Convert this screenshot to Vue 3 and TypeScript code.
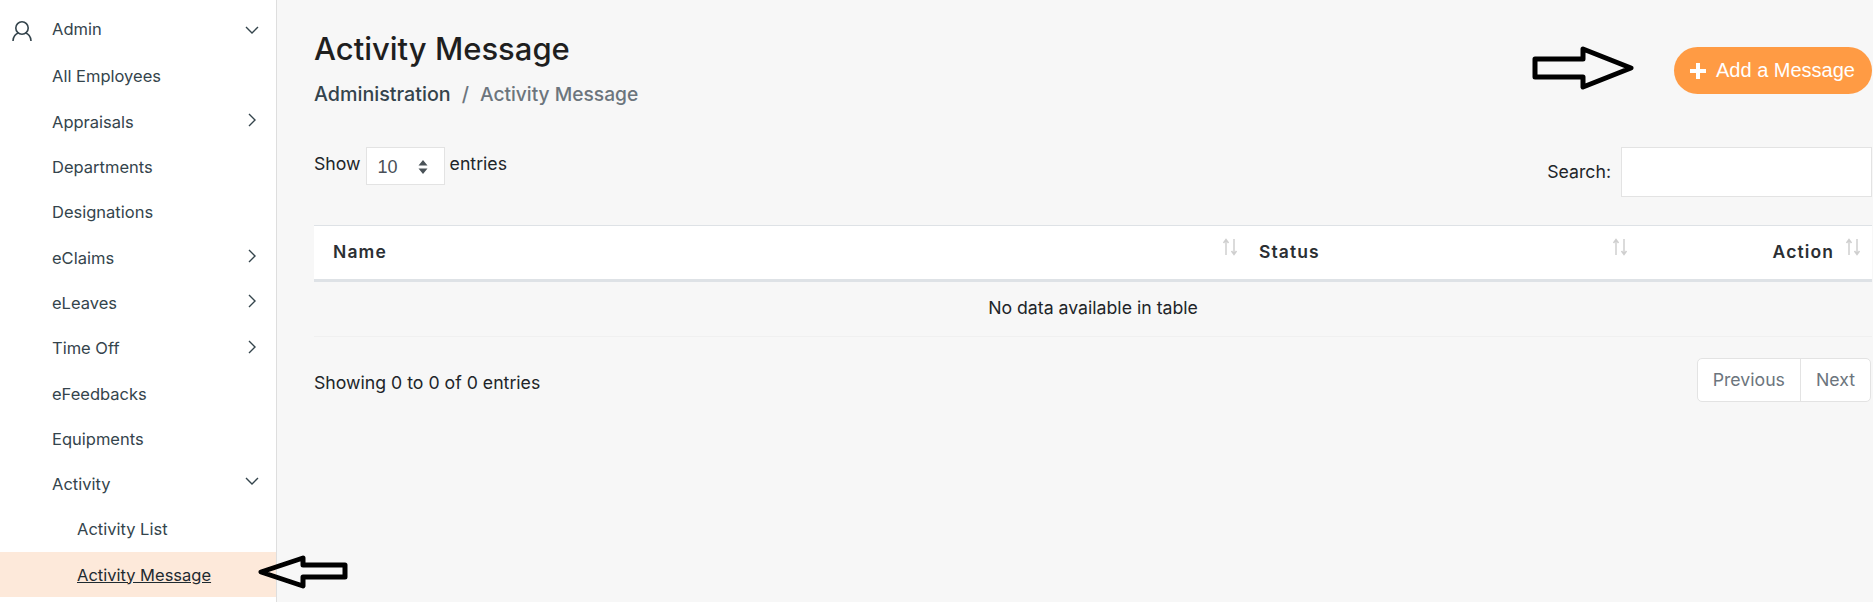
<script setup lang="ts">
interface NavItem {
  label: string
  arrow?: 'right' | 'down'
}

const navItems: NavItem[] = [
  { label: 'All Employees' },
  { label: 'Appraisals', arrow: 'right' },
  { label: 'Departments' },
  { label: 'Designations' },
  { label: 'eClaims', arrow: 'right' },
  { label: 'eLeaves', arrow: 'right' },
  { label: 'Time Off', arrow: 'right' },
  { label: 'eFeedbacks' },
  { label: 'Equipments' },
  { label: 'Activity', arrow: 'down' },
]

const columns = ['Name', 'Status', 'Action']
</script>

<template>
  <div class="page">
    <aside class="sidebar">
      <div class="nav-row nav-head">
        <svg class="user-icon" viewBox="0 0 20 20" width="20" height="20" fill="none" stroke="#34444c" stroke-width="1.6">
          <circle cx="10" cy="7" r="6.200" />
          <path d="M1 20c0-4.500 3-7.500 5.500-8M19 20c0-4.500-3-7.500-5.500-8" />
        </svg>
        <span>Admin</span>
        <svg class="chevron" viewBox="0 0 14 14" width="14" height="14" fill="none" stroke="#34444c" stroke-width="1.400">
          <path d="M1 4l6 6 6-6" />
        </svg>
      </div>
      <div v-for="item in navItems" :key="item.label" class="nav-row">
        <span>{{ item.label }}</span>
        <svg v-if="item.arrow === 'right'" class="chevron chevron-right" viewBox="0 0 14 14" width="14" height="14" fill="none" stroke="#34444c" stroke-width="1.400">
          <path d="M4 1l6 6-6 6" />
        </svg>
        <svg v-else-if="item.arrow === 'down'" class="chevron chevron-open" viewBox="0 0 14 14" width="14" height="14" fill="none" stroke="#34444c" stroke-width="1.400">
          <path d="M1 4l6 6 6-6" />
        </svg>
      </div>
      <div class="nav-row nav-sub">Activity List</div>
      <div class="nav-row nav-sub nav-active"><u>Activity Message</u></div>
    </aside>

    <main class="content">
      <div class="page-header">
        <div>
          <h1>Activity Message</h1>
          <div class="crumbs">
            <span class="crumb-root">Administration</span>
            <span class="crumb-sep">/</span>
            <span class="crumb-current">Activity Message</span>
          </div>
        </div>
        <button class="add-btn">
          <svg viewBox="0 0 16 16" width="16" height="16" fill="#fff"><path d="M6 0h4v6h6v4h-6v6H6v-6H0V6h6z" /></svg>
          Add a Message
        </button>
      </div>

      <div class="controls">
        <div class="length">
          <span>Show</span>
          <div class="select">
            <span>10</span>
            <svg viewBox="0 0 10 14" width="10" height="14" fill="#4a5258"><path d="M5 0l4.500 5.500h-9zM5 14L.5 8.500h9z" /></svg>
          </div>
          <span>entries</span>
        </div>
        <div class="search">
          <span class="search-label">Search:</span>
          <div class="search-box"></div>
        </div>
      </div>

      <div class="table">
        <div class="thead">
          <div v-for="col in columns" :key="col" class="th" :class="'th-' + col.toLowerCase()">
            <span>{{ col }}</span>
            <svg class="sort" viewBox="0 0 16 18" width="16" height="18" fill="none" stroke="#cfcfcf" stroke-width="1.500">
              <path d="M4 17V2M1.500 5L4 1.500 6.500 5" />
              <path d="M12 1v15M9.500 13l2.500 3.500 2.500-3.500" />
            </svg>
          </div>
        </div>
        <div class="empty">No data available in table</div>
      </div>

      <div class="table-foot">
        <span>Showing 0 to 0 of 0 entries</span>
        <div class="pager">
          <span class="page-btn">Previous</span>
          <span class="page-btn">Next</span>
        </div>
      </div>
    </main>

    <!-- hand drawn annotation arrows -->
    <svg class="note note-top" viewBox="0 0 102 44" width="102" height="44" fill="none" stroke="#000" stroke-width="5" stroke-linejoin="round">
      <path d="M3 13h48V3l48 19-48 19V31H3z" />
    </svg>
    <svg class="note note-side" viewBox="0 0 90 34" width="90" height="34" fill="none" stroke="#000" stroke-width="5" stroke-linejoin="round">
      <path d="M87 10H45V3L3 17l42 14v-9h42z" />
    </svg>
  </div>
</template>

<style>
html, body {
  margin: 0;
  background: #f7f7f7;
}
</style>

<style scoped>
.page {
  position: relative;
  display: flex;
  width: 1873px;
  height: 602px;
  overflow: hidden;
  background: #f7f7f7;
  font-family: Inter, "Liberation Sans", sans-serif;
  font-size: 17.700px;
  color: #212529;
}

.sidebar {
  flex: 0 0 276px;
  background: #fff;
  border-right: 1px solid #dedede;
  padding-top: 7px;
  font-size: 16.500px;
}

.nav-row {
  position: relative;
  display: flex;
  align-items: center;
  box-sizing: border-box;
  height: 45.3px;
  padding-left: 52px;
  color: #34444c;
}

.nav-head {
  height: 46.8px;
  padding-bottom: 3px;
}

.user-icon {
  position: absolute;
  left: 12px;
  top: 14px;
}

.chevron {
  position: absolute;
  left: 245px;
  top: 16px;
}

.chevron-right {
  top: 14px;
}

.chevron-open {
  top: 13px;
}

.nav-sub {
  padding-left: 77px;
}

.nav-active {
  background: #fde9da;
  color: #1f2a30;
}

.content {
  flex: 1;
  padding: 0 1px 0 37px;
  min-width: 0;
}

.page-header {
  display: flex;
  justify-content: space-between;
  align-items: flex-start;
  height: 147px;
}

h1 {
  margin: 30px 0 0;
  font-size: 31px;
  line-height: 38px;
  font-weight: 500;
  color: #1f1f1f;
}

.crumbs {
  display: flex;
  gap: 11px;
  margin-top: 13px;
  font-size: 19.700px;
  line-height: 26px;
  font-weight: 500;
}

.crumb-root {
  color: #34444c;
}

.crumb-sep,
.crumb-current {
  color: #6c757d;
}

.crumb-current {
  font-size: 19.200px;
}

.add-btn {
  display: flex;
  align-items: center;
  gap: 10px;
  width: 198px;
  height: 47px;
  margin-top: 47px;
  padding: 0 0 0 16px;
  border: 0;
  border-radius: 24px;
  background: #ff9b44;
  color: #fff;
  font-family: "Liberation Sans", sans-serif;
  font-size: 20px;
}

.controls {
  display: flex;
  justify-content: space-between;
  align-items: flex-start;
  height: 78px;
}

.length {
  display: flex;
  align-items: flex-start;
  gap: 5px;
  line-height: 34px;
}

.select {
  display: flex;
  align-items: center;
  justify-content: space-between;
  box-sizing: border-box;
  width: 79px;
  height: 38px;
  padding: 1px 16px 0 11px;
  background: #fff;
  border: 1px solid #e3e3e3;
  color: #495057;
  font-family: "Liberation Sans", sans-serif;
  font-size: 18px;
}

.search {
  display: flex;
  align-items: center;
  gap: 10px;
}

.search-label {
  padding-bottom: 2px;
}

.search-box {
  box-sizing: border-box;
  width: 251px;
  height: 50px;
  background: #fff;
  border: 1px solid #e3e3e3;
}

.table {
  border-top: 1px solid #dee2e6;
}

.thead {
  display: grid;
  grid-template-columns: 945px 396px 1fr;
  height: 53px;
  background: #fff;
  border-bottom: 3px solid #dee2e6;
}

.th {
  position: relative;
  display: flex;
  align-items: center;
  padding-bottom: 3px;
  box-sizing: border-box;
  font-size: 17.500px;
  font-weight: 600;
  letter-spacing: 1.100px;
  color: #2b2f33;
}

.th-name {
  padding-left: 19px;
}

.th-action {
  justify-content: flex-end;
  padding-right: 38px;
}

.sort {
  position: absolute;
  top: 12px;
}

.th-name .sort {
  right: 21px;
}

.th-status .sort {
  right: 27px;
}

.th-action .sort {
  right: 11px;
}

.empty {
  display: flex;
  align-items: center;
  justify-content: center;
  box-sizing: border-box;
  height: 55px;
  padding-bottom: 4px;
  border-bottom: 1px solid #f0f0f0;
  color: #212529;
}

.table-foot {
  display: flex;
  justify-content: space-between;
  align-items: flex-start;
  margin-top: 19px;
  line-height: 53px;
}

.pager {
  display: flex;
  box-sizing: border-box;
  height: 44px;
  margin: 2px 1px 0 0;
  background: #fff;
  border: 1px solid #e3e3e3;
  border-radius: 5px;
  color: #6c757d;
  line-height: 42px;
}

.page-btn {
  padding: 0 15px;
}

.page-btn + .page-btn {
  border-left: 1px solid #e3e3e3;
  padding: 0 15px;
}

.note {
  position: absolute;
}

.note-top {
  left: 1532px;
  top: 46px;
}

.note-side {
  left: 258px;
  top: 555px;
}
</style>
